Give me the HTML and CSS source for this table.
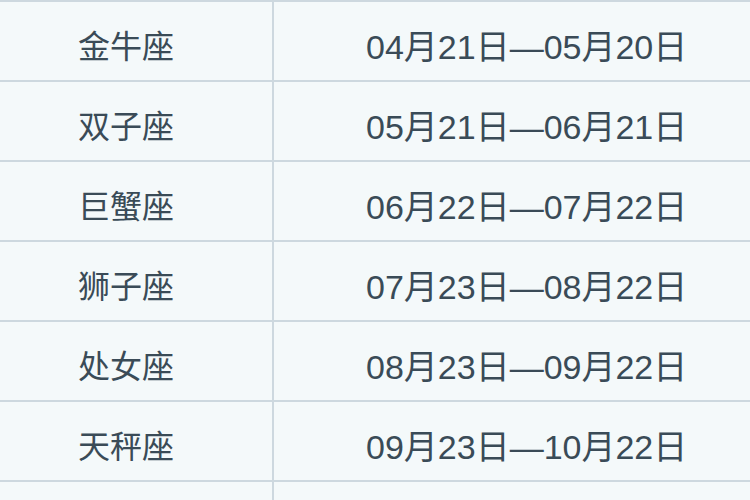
FILE: index.html
```html
<!DOCTYPE html>
<html lang="zh-CN">
<head>
<meta charset="utf-8">
<title>星座日期</title>
<link rel="stylesheet" href="styles.css">
</head>
<body>
<table class="zodiac">
  <tbody>
    <tr><td class="name">金牛座</td><td class="date">04月21日—05月20日</td></tr>
    <tr><td class="name">双子座</td><td class="date">05月21日—06月21日</td></tr>
    <tr><td class="name">巨蟹座</td><td class="date">06月22日—07月22日</td></tr>
    <tr><td class="name">狮子座</td><td class="date">07月23日—08月22日</td></tr>
    <tr><td class="name">处女座</td><td class="date">08月23日—09月22日</td></tr>
    <tr><td class="name">天秤座</td><td class="date">09月23日—10月22日</td></tr>
    <tr class="tail"><td class="name"></td><td class="date"></td></tr>
  </tbody>
</table>
</body>
</html>
```
FILE: styles.css
```css
html, body {
  margin: 0;
  padding: 0;
  background: #f4f9fa;
  overflow: hidden;
}
.zodiac {
  border-collapse: collapse;
  width: 750px;
  table-layout: fixed;
  border-top: 2px solid #cdd8df;
  color: #3a4b57;
  font-family: "Liberation Sans", "Noto Sans CJK SC", sans-serif;
}
.zodiac td {
  height: 80px;
  padding: 6px 0 0 0;
  box-sizing: border-box;
  border-bottom: 2px solid #cdd8df;
  vertical-align: middle;
  white-space: nowrap;
}
.zodiac .name {
  width: 273px;
  border-right: 2px solid #cdd8df;
  text-align: center;
  padding-right: 20px;
  font-size: 32px;
}
.zodiac .date {
  padding-left: 92px;
  font-size: 34px;
  text-align: left;
}
.zodiac .tail td {
  height: 40px;
  border-bottom: none;
}
```
